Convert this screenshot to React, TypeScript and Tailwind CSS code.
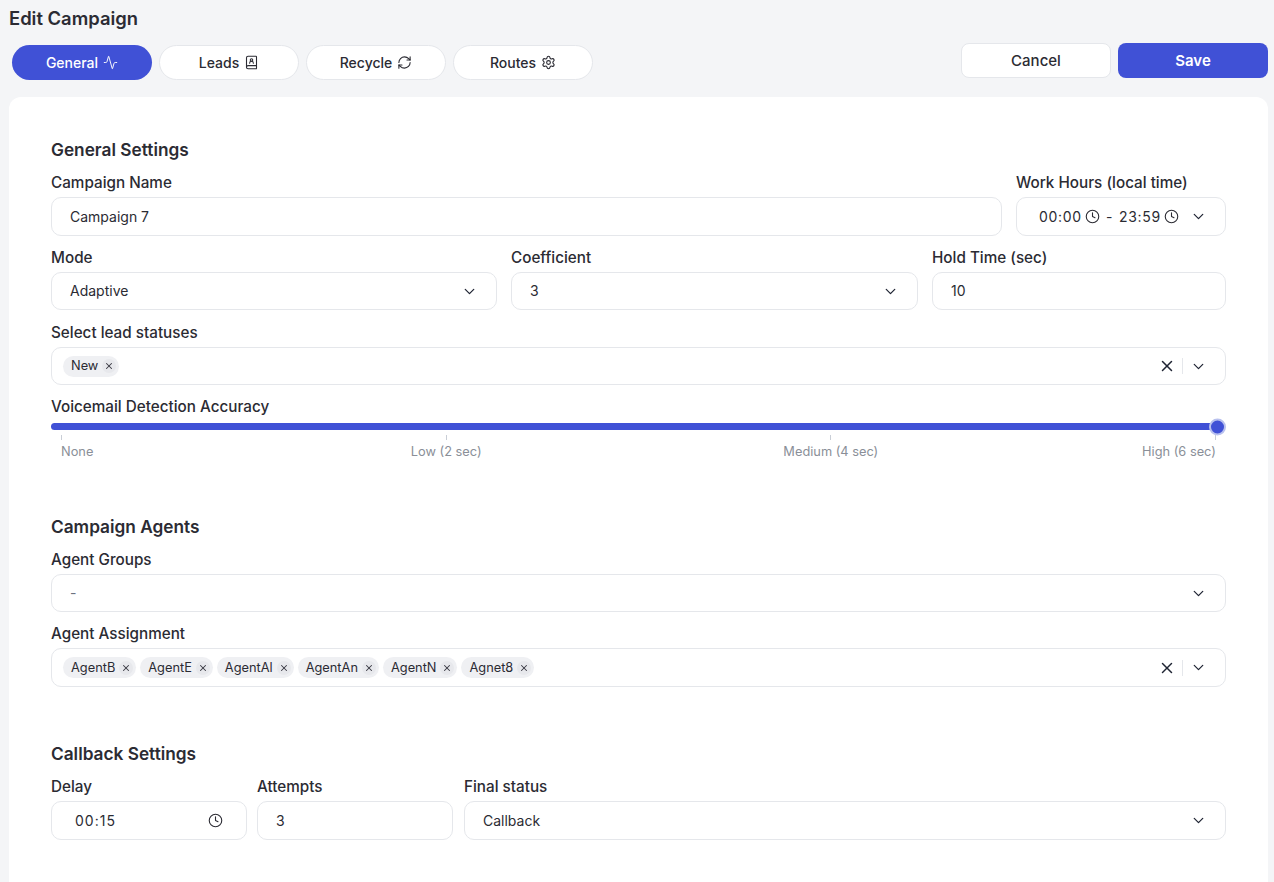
import { Activity, BookUser, ChevronDown, Clock, RefreshCw, Settings, X } from 'lucide-react'
import type { ReactNode } from 'react'

const tabs = [
  { label: 'General', icon: <Activity size={15} strokeWidth={1.5} />, active: true },
  { label: 'Leads', icon: <BookUser size={15} strokeWidth={1.75} /> },
  { label: 'Recycle', icon: <RefreshCw size={15} strokeWidth={1.75} /> },
  { label: 'Routes', icon: <Settings size={15} strokeWidth={1.75} /> },
]

const agents = ['AgentB', 'AgentE', 'AgentAl', 'AgentAn', 'AgentN', 'Agnet8']

const marks = [
  { label: 'None', align: 'items-start' },
  { label: 'Low (2 sec)', align: 'items-center' },
  { label: 'Medium (4 sec)', align: 'items-center' },
  { label: 'High (6 sec)', align: 'items-end' },
]

function Field({ label, className, children }: { label: string; className?: string; children: ReactNode }) {
  return (
    <div className={className}>
      <label className="block h-[25px] text-[15.25px] leading-[22px] font-medium text-[#2b2b33]">{label}</label>
      {children}
    </div>
  )
}

function Box({ tall, children }: { tall?: boolean; children: ReactNode }) {
  return (
    <div
      className={
        tall
          ? 'flex h-[39px] items-center rounded-[10px] border border-[#e5e7eb] bg-white pl-[18px] text-sm text-[#2b2b33]'
          : 'flex h-[38px] items-center rounded-[10px] border border-[#e5e7eb] bg-white pl-[18px] text-sm text-[#2b2b33]'
      }
    >
      {children}
    </div>
  )
}

function Select({ value, muted, tall }: { value: string; muted?: boolean; tall?: boolean }) {
  return (
    <Box tall={tall}>
      <span className={muted ? 'flex-1 text-[#6b7280]' : 'flex-1'}>{value}</span>
      <ChevronDown size={17} strokeWidth={1.75} className="mr-[18px] text-[#1f2433]" />
    </Box>
  )
}

function Chip({ label }: { label: string }) {
  return (
    <span className="flex h-[21px] items-center gap-[4px] rounded-full bg-[#eff0f3] pl-2 pr-[3px] text-[12.8px] text-[#2b2b33]">
      {label}
      <span className="flex h-[14px] w-[14px] items-center justify-center rounded-full bg-[#e7e8ec]">
        <X size={10} strokeWidth={2.5} className="text-[#3a3a44]" />
      </span>
    </span>
  )
}

function MultiSelect({ items, tall }: { items: string[]; tall?: boolean }) {
  return (
    <div
      className={
        tall
          ? 'flex h-[39px] items-center rounded-[10px] border border-[#e5e7eb] bg-white pl-[11px]'
          : 'flex h-[38px] items-center rounded-[10px] border border-[#e5e7eb] bg-white pl-[11px]'
      }
    >
      <div className="flex flex-1 gap-[4px]">
        {items.map((item) => (
          <Chip key={item} label={item} />
        ))}
      </div>
      <X size={18} strokeWidth={2} className="text-[#1f2433]" />
      <span className="ml-[6px] mr-[7px] h-[16px] w-px bg-[#e5e7eb]" />
      <ChevronDown size={17} strokeWidth={1.75} className="mr-[18px] text-[#1f2433]" />
    </div>
  )
}

export default function App() {
  return (
    <div className="h-[882px] overflow-hidden bg-[#f4f5f7] pl-[9px] pr-[6px] pt-[7px] font-['Inter',sans-serif]">
      <h1 className="h-[23px] text-[18.4px] leading-[23px] font-semibold text-[#2b2b33]">Edit Campaign</h1>

      <div className="mt-[13px] flex items-start justify-between">
        <nav className="mt-[2px] ml-[3px] flex gap-[7px]">
          {tabs.map((tab) => (
            <button
              key={tab.label}
              className={
                tab.active
                  ? 'flex h-[35px] w-[140px] items-center justify-center gap-[5px] rounded-full bg-[#4051d6] text-sm font-medium text-white'
                  : 'flex h-[35px] w-[140px] items-center justify-center gap-[5px] rounded-full border border-[#e5e7eb] bg-white text-sm font-medium text-[#2b2b33]'
              }
            >
              {tab.label}
              {tab.icon}
            </button>
          ))}
        </nav>
        <div className="flex gap-[7px]">
          <button className="h-[35px] w-[150px] rounded-lg border border-[#e5e7eb] bg-white pt-px text-[15px] font-medium text-[#2b2b33]">
            Cancel
          </button>
          <button className="h-[35px] w-[150px] rounded-lg bg-[#4051d6] pt-px text-[15px] font-semibold text-white">Save</button>
        </div>
      </div>

      <main className="mt-[17px] h-[800px] rounded-xl bg-white px-[42px] pt-[41px]">
        <h2 className="h-[24px] text-[17.25px] leading-[24px] font-semibold text-[#2b2b33]">General Settings</h2>

        <div className="mt-[10px] flex gap-[14px]">
          <Field label="Campaign Name" className="flex-1">
            <Box tall>Campaign 7</Box>
          </Field>
          <Field label="Work Hours (local time)" className="w-[210px]">
            <div className="flex h-[39px] items-center rounded-[10px] border border-[#e5e7eb] bg-white pl-[22px] text-sm tracking-[0.7px] text-[#2b2b33]">
              <span>00:00</span>
              <Clock size={15} strokeWidth={1.75} className="ml-[3px]" />
              <span className="mx-[6px]">-</span>
              <span>23:59</span>
              <Clock size={15} strokeWidth={1.75} className="ml-[3px]" />
              <ChevronDown size={17} strokeWidth={1.75} className="ml-[11px] text-[#1f2433]" />
            </div>
          </Field>
        </div>

        <div className="mt-[11px] flex gap-[14px]">
          <Field label="Mode" className="flex-1">
            <Select value="Adaptive" />
          </Field>
          <Field label="Coefficient" className="w-[407px]">
            <Select value="3" />
          </Field>
          <Field label="Hold Time (sec)" className="w-[294px]">
            <Box>10</Box>
          </Field>
        </div>

        <Field label="Select lead statuses" className="mt-[12px]">
          <MultiSelect items={['New']} />
        </Field>

        <Field label="Voicemail Detection Accuracy" className="mt-[11px]">
          <div className="relative mt-[2px] mr-[9px] h-[7px] rounded-full bg-[#4051d6]">
            <span className="absolute top-1/2 right-[-9px] h-[17px] w-[17px] -translate-y-1/2 rounded-full border-2 border-[#b9c1ee] bg-[#4051d6]" />
          </div>
          <div className="mt-[5px] flex justify-between pl-[10px] pr-[10px]">
            {marks.map((mark) => (
              <div key={mark.label} className={`flex w-px flex-col ${mark.align}`}>
                <span className="h-[5px] w-px bg-[#c9ced6]" />
                <span className="mt-[4px] text-[12.8px] leading-[16px] whitespace-nowrap text-[#8a8f98]">{mark.label}</span>
              </div>
            ))}
          </div>
        </Field>

        <h2 className="mt-[55px] h-[24px] text-[17.25px] leading-[24px] font-semibold text-[#2b2b33]">Campaign Agents</h2>

        <Field label="Agent Groups" className="mt-[10px]">
          <Select value="-" muted />
        </Field>

        <Field label="Agent Assignment" className="mt-[11px]">
          <MultiSelect items={agents} tall />
        </Field>

        <h2 className="mt-[55px] h-[24px] text-[17.25px] leading-[24px] font-semibold text-[#2b2b33]">Callback Settings</h2>

        <div className="mt-[10px] flex gap-[10px]">
          <Field label="Delay" className="w-[196px]">
            <div className="flex h-[39px] items-center justify-between rounded-[10px] border border-[#e5e7eb] bg-white pl-[23px] pr-[23px] text-sm tracking-[1px] text-[#2b2b33]">
              <span>00:15</span>
              <Clock size={15} strokeWidth={1.75} />
            </div>
          </Field>
          <Field label="Attempts" className="w-[196px]">
            <Box tall>3</Box>
          </Field>
          <Field label="Final status" className="ml-px flex-1">
            <Select value="Callback" tall />
          </Field>
        </div>
      </main>
    </div>
  )
}
